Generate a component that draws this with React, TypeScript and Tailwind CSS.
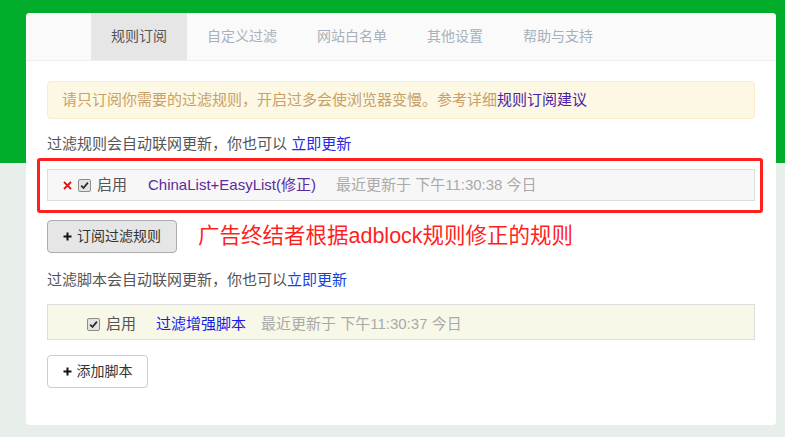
const font = "font-['Liberation_Sans','Noto_Sans_CJK_SC',sans-serif]";

function Check() {
  return (
    <span className="inline-flex h-[13px] w-[13px] items-center justify-center rounded-[2px] border border-[#8c8c8c] bg-[#e3e3e3]">
      <svg width="9" height="9" viewBox="0 0 9 9">
        <path d="M1.2 4.6 L3.5 7 L7.9 1.6" fill="none" stroke="#2b2b2b" strokeWidth="1.8" />
      </svg>
    </span>
  );
}

function Plus() {
  return (
    <svg width="9" height="9" viewBox="0 0 9 9" className="mr-[5px]">
      <path d="M4.5 0.5 V8.5 M0.5 4.5 H8.5" stroke="#111" strokeWidth="2" />
    </svg>
  );
}

const tabs = ["规则订阅", "自定义过滤", "网站白名单", "其他设置", "帮助与支持"];

export default function App() {
  return (
    <div
      className={`${font} h-[437px] w-[785px] overflow-hidden bg-[linear-gradient(#02ad2b_0,#02ad2b_163px,#e8eeea_163px)] pt-[13px] pl-[26px]`}
    >
      <div className="relative h-[412px] w-[750px] rounded-[4px] bg-white">
        {/* tabs */}
        <div className="flex h-[48px] rounded-t-[4px] border-b border-[#eeeeee] bg-[#fafafa] pl-[65px]">
          {tabs.map((t, i) => (
            <div
              key={t}
              className={`flex items-center px-5 text-[14px] ${
                i === 0 ? "bg-[#e6e6e6] text-[#555]" : "text-[#a8b0ba]"
              }`}
            >
              {t}
            </div>
          ))}
        </div>

        <div className="px-[21px] pt-[20px]">
          <div className="flex h-[38px] items-center rounded-[4px] border border-[#faebcc] bg-[#fcf8e3] px-[14px] text-[15px] text-[#c8a06a]">
            请只订阅你需要的过滤规则，开启过多会使浏览器变慢。参考详细
            <span className="text-[#4a22a8]">规则订阅建议</span>
          </div>

          <div className="mt-[15px] h-[20px] text-[15px] leading-[20px] text-[#555]">
            过滤规则会自动联网更新，你也可以 <span className="text-[#2828e0]">立即更新</span>
          </div>

          <div className="mt-[15px] flex h-[32px] items-center border border-[#dddddd] bg-[#f7f7f7] pl-[15px] text-[15px]">
            <svg width="9" height="9" viewBox="0 0 9 9" className="mr-[6px]">
              <path d="M1 1 L8 8 M8 1 L1 8" stroke="#ee1111" strokeWidth="1.8" />
            </svg>
            <Check />
            <span className="ml-[6px] text-[#555]">启用</span>
            <span className="ml-[21px] text-[#5b2a9e]">ChinaList+EasyList(修正)</span>
            <span className="ml-[20px] text-[#aaaaaa]">最近更新于 下午11:30:38 今日</span>
          </div>

          <div className="mt-[19px] flex items-center">
            <div className="flex h-[33px] w-[130px] items-center justify-center rounded-[4px] border border-[#adadad] bg-[#e6e6e6] text-[14px] text-[#333]">
              <Plus />
              订阅过滤规则
            </div>
            <div className="ml-[21px] text-[21.5px] text-[#ff1f1f]">广告终结者根据adblock规则修正的规则</div>
          </div>

          <div className="mt-[17px] h-[20px] text-[15px] leading-[20px] text-[#555]">
            过滤脚本会自动联网更新，你也可以<span className="text-[#1143dd]">立即更新</span>
          </div>

          <div className="mt-[14px] flex h-[36px] items-center border border-[#dddddd] bg-[#f7f8e7] pl-[39px] pt-[4px] text-[15px]">
            <Check />
            <span className="ml-[6px] text-[#555]">启用</span>
            <span className="ml-[20px] text-[#1a1ae6]">过滤增强脚本</span>
            <span className="ml-[15px] text-[#aaaaaa]">最近更新于 下午11:30:37 今日</span>
          </div>

          <div className="mt-[15px] flex h-[33px] w-[101px] items-center justify-center rounded-[4px] border border-[#cccccc] bg-white text-[14px] text-[#333]">
            <Plus />
            添加脚本
          </div>
        </div>

        {/* annotation box */}
        <div className="absolute left-[11px] top-[145px] h-[55px] w-[726px] rounded-[3px] border-[3px] border-[#ff1f1f]" />
      </div>
    </div>
  );
}
